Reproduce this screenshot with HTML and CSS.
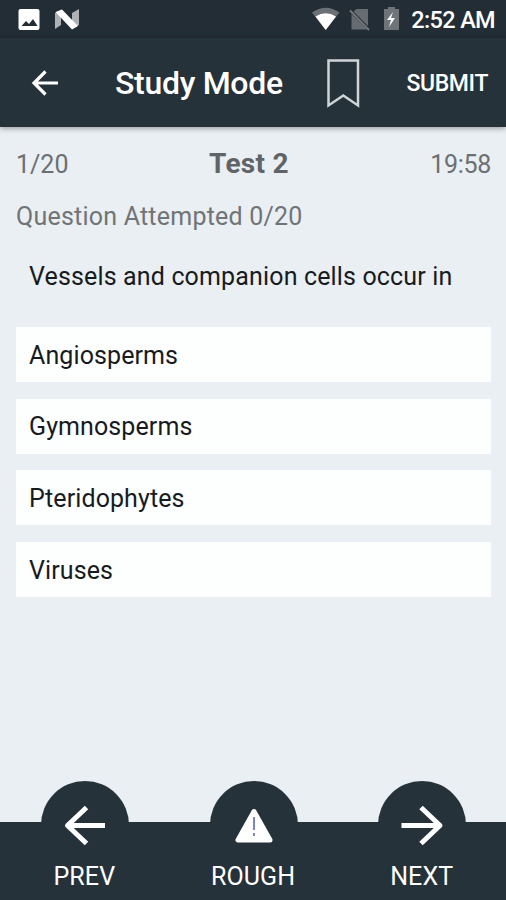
FILE: index.html
```html
<!DOCTYPE html>
<html lang="en">
<head>
<meta charset="utf-8">
<title>Study Mode</title>
<link rel="stylesheet" href="styles.css">
</head>
<body>
<div class="screen">
  <div class="status">
    <svg class="status-icons" width="64" height="38" viewBox="0 0 64 38">
      <rect x="1.500" y="9" width="21" height="21" rx="2" fill="#fff"/>
      <path d="M4.500 26l4.500-5 3 3 4-5 4.500 7z" fill="#232d35"/>
      <path d="M38 13l6-3v15l-6 4z" fill="#aeb2b5"/>
      <path d="M55 13l7-4v16l-7 4z" fill="#aeb2b5"/>
      <path d="M38.500 12L45 9.500 61 26l-6 3.500z" fill="#fff"/>
    </svg>
    <svg class="status-icons" width="90" height="38" viewBox="312 0 90 38">
      <path d="M312 12.500Q325.700 3 339.500 12.500L325.700 30z" fill="#6a7075"/>
      <path d="M315.500 16.500Q325.700 10 336 16.500L325.700 30z" fill="#fff"/>
      <path d="M356.500 9H368v17L353.500 11.500zM351.500 14L367 29.500H351.500z" fill="#666c71"/>
      <path d="M350 10.500l19 19.500" stroke="#73797d" stroke-width="1.800"/>
      <path d="M384 9h4V7h7v2h4v21h-15z" fill="#6e7478"/>
      <path d="M393 12l-6 8h4l-2 7 6-9h-4z" fill="#fff"/>
    </svg>
    <span class="clock">2:52 AM</span>
  </div>
  <header class="appbar">
    <svg class="back" width="28" height="28" viewBox="0 0 28 28"><path d="M27 14H3M14.500 2.500L3 14l11.500 11.500"/></svg>
    <h1 class="title">Study Mode</h1>
    <svg class="bookmark" width="34" height="52" viewBox="0 0 34 52"><path d="M2.500 3.500H32v45L17.300 38.500 2.500 48.500z"/></svg>
    <button class="submit">SUBMIT</button>
  </header>
  <main class="content">
    <div class="info">
      <span class="page">1/20</span>
      <strong class="test">Test 2</strong>
      <span class="timer">19:58</span>
    </div>
    <div class="attempted">Question Attempted 0/20</div>
    <p class="question">Vessels and companion cells occur in</p>
    <ul class="options">
      <li>Angiosperms</li>
      <li>Gymnosperms</li>
      <li>Pteridophytes</li>
      <li>Viruses</li>
    </ul>
  </main>
  <nav class="bottom">
    <a class="tab"><span class="bump"><svg width="88" height="88" viewBox="0 0 88 88"><path class="arrow" d="M64 44.500H25.500M45.500 26.500l-19 18 19 18"/></svg></span><span class="label">PREV</span></a>
    <a class="tab"><span class="bump"><svg width="88" height="88" viewBox="0 0 88 88"><path class="warn" d="M44 30.500L28 59h32z"/><path class="mark" d="M44 36v13M44 52v3"/></svg></span><span class="label">ROUGH</span></a>
    <a class="tab"><span class="bump"><svg width="88" height="88" viewBox="0 0 88 88"><path class="arrow" d="M23.500 44.500H62M43 26.500l19 18-19 18"/></svg></span><span class="label">NEXT</span></a>
  </nav>
</div>
</body>
</html>
```
FILE: styles.css
```css
* { box-sizing: border-box; }
body { margin: 0; font-family: Roboto, "Liberation Sans", sans-serif; background: #e9eff2; }
.screen { width: 506px; height: 900px; display: flex; flex-direction: column; overflow: hidden; background: #e9eff2; }
.status { height: 38px; display: flex; align-items: center; padding: 0 11px 0 17px; background: #232d35; color: #fff; }
.status-icons { display: block; flex: none; }
.status-icons + .status-icons { margin-left: 231px; }
.clock { margin-left: auto; font-size: 23.500px; font-weight: 500; letter-spacing: -.65px; line-height: 28px; white-space: nowrap; padding-top: 2px; }
.appbar { height: 89px; display: flex; align-items: center; background: #26323a; color: #fff; box-shadow: 0 1px 6px rgba(0,0,0,.4); padding: 0 18px 0 31px; z-index: 1; }
.back { fill: none; stroke: #fff; stroke-width: 3.200; }
.title { margin: 1px 0 0 56px; font-size: 32px; font-weight: 500; letter-spacing: -.3px; line-height: 40px; white-space: nowrap; width: 211px; }
.bookmark { fill: none; stroke: #cfd4d7; stroke-width: 2.500; }
.submit { margin: 2px 0 0 auto; padding: 0; border: 0; background: none; color: #fff; font: 500 23px/30px Roboto, sans-serif; letter-spacing: -.4px; }
.content { flex: 1; padding: 20px 15px 0 16px; color: #181b1d; font-size: 25px; line-height: 34px; }
.info { display: grid; grid-template-columns: 1fr auto 1fr; color: #6c7073; }
.test { margin-right: 9px; font-size: 28px; font-weight: 700; letter-spacing: .3px; color: #606466; }
.timer { text-align: right; letter-spacing: -.3px; }
.page, .timer { padding-top: 1px; }
.attempted { margin-top: 18px; color: #707477; letter-spacing: .22px; }
.question { margin: 26px 13px 0; white-space: nowrap; letter-spacing: .15px; }
.options { list-style: none; margin: 33px 0 0; padding: 0; display: grid; gap: 16.700px; letter-spacing: .1px; }
.options li { height: 55px; display: flex; align-items: center; padding: 2px 13px 0; background: #fdfefe; }
.bottom { height: 78.500px; display: flex; flex: none; background: #26323a; color: #fff; }
.tab { flex: 1; display: flex; flex-direction: column; align-items: center; }
.bump { width: 88px; height: 88px; margin: -40.500px -1px 0 0; border-radius: 50%; background: #26323a; }
.bump svg { display: block; }
.arrow { fill: none; stroke: #fff; stroke-width: 5; stroke-linejoin: round; }
.warn { fill: #fff; stroke: #fff; stroke-width: 5; stroke-linejoin: round; }
.mark { fill: none; stroke: #7d86c8; stroke-width: 2; }
.label { font-size: 25px; line-height: 30px; margin-top: -7px; letter-spacing: .1px; }
```
